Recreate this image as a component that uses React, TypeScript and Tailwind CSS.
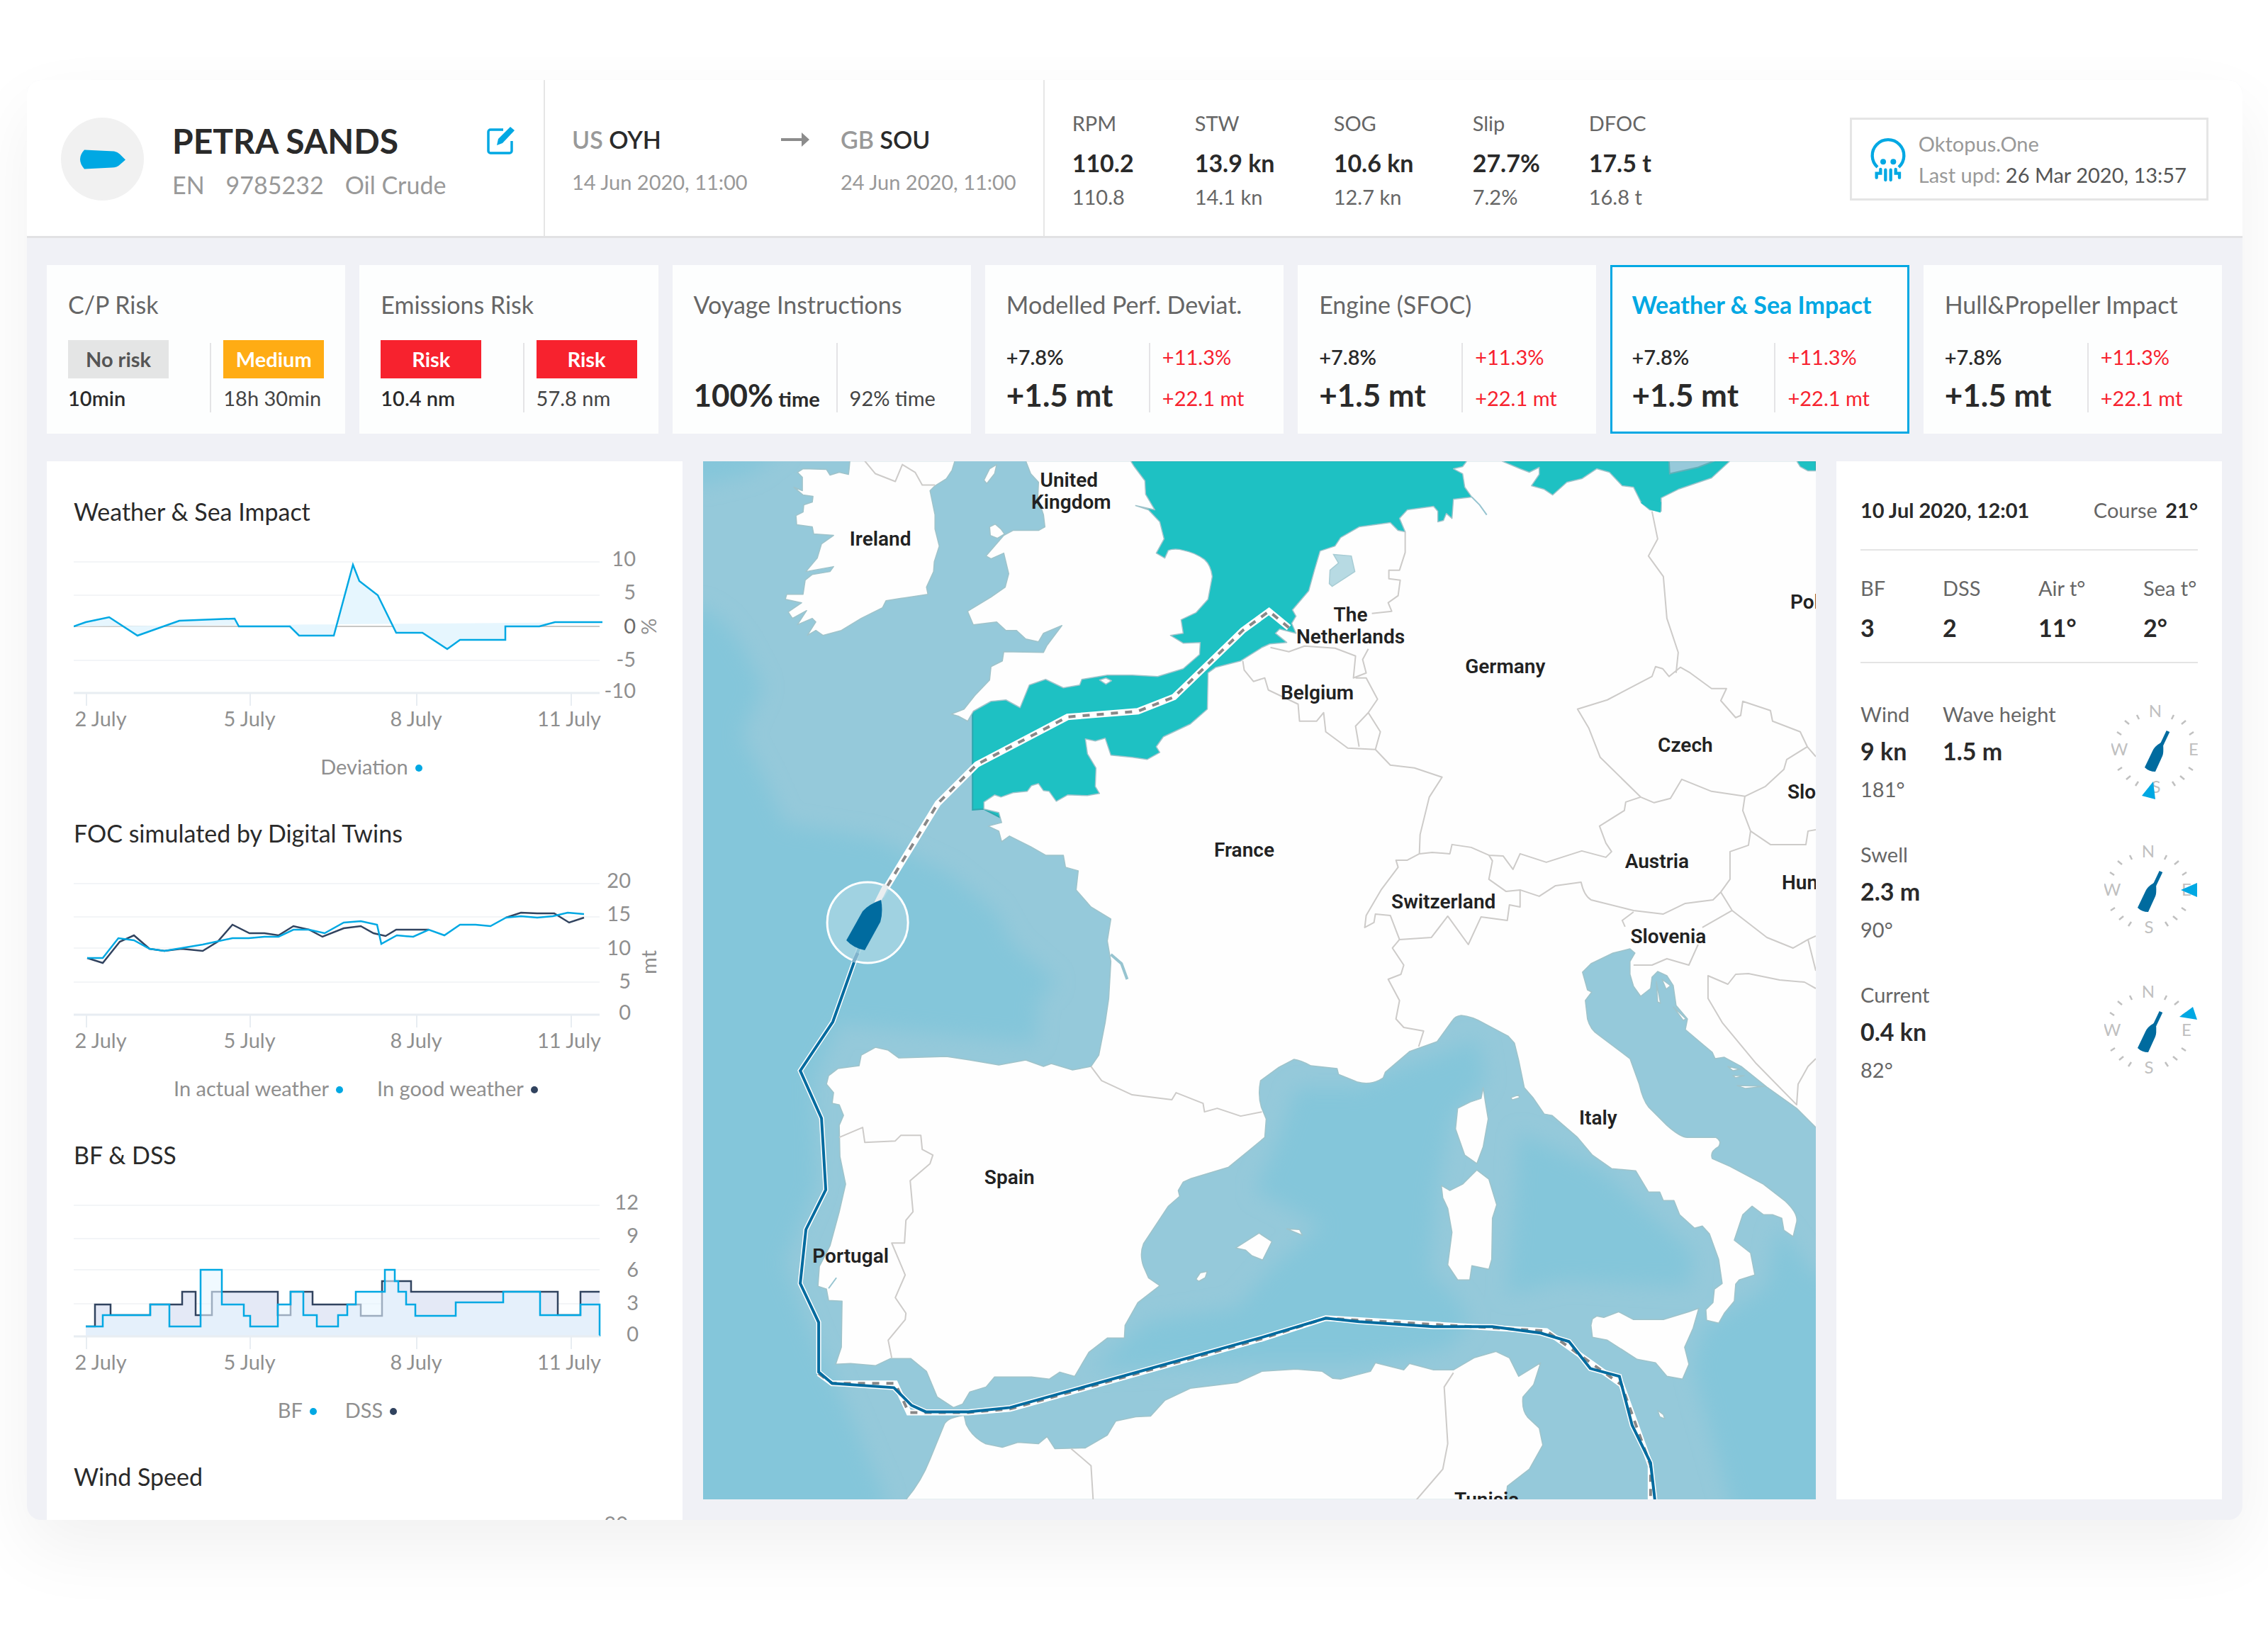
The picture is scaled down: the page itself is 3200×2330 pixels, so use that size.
import { clsx } from "clsx";

type Series = { d: string; color: string; fill?: string; fillD?: string; fillOpacity?: number };

type ChartProps = {
  title: string;
  labels: string[];
  labelX: number;
  unit?: string;
  unitY?: number;
  zeroLine?: boolean;
  series: Series[];
  legend: { name: string; dot: string }[];
  legendClass?: string;
};

const metrics = [
  { label: "RPM", value: "110.2", sub: "110.8" },
  { label: "STW", value: "13.9 kn", sub: "14.1 kn" },
  { label: "SOG", value: "10.6 kn", sub: "12.7 kn" },
  { label: "Slip", value: "27.7%", sub: "7.2%" },
  { label: "DFOC", value: "17.5 t", sub: "16.8 t" },
];

const impactTiles = [
  { title: "Modelled Perf. Deviat.", active: false },
  { title: "Engine (SFOC)", active: false },
  { title: "Weather & Sea Impact", active: true },
  { title: "Hull&Propeller Impact", active: false },
];

const deviationLine =
  "M0 138L17 132L50 125L90 151L149 130L227 127L233 138H305L318 151H367L394 51L403 74L429 94L455 147H492L527 170L545 157H609V138H657L679 132H746";

const bfLine =
  "M17 218H41V202H108V187H135V218H179V138H209V187H240V203H249V218H288V187H306V169H324V202H343V218H373V202H386V187H398V169H439V138H453V154H458V169H469V187H482V203H539V184H606V169H658V202H715V187H742V232";

const dssLine =
  "M17 218H30V187H52V202H108V187H153V169H172V202H195V169H288V202H306V169H337V187H405V203H435V154H476V169H683V202H715V169H742";

const charts: ChartProps[] = [
  {
    title: "Weather & Sea Impact",
    labels: ["10", "5", "0", "-5", "-10"],
    labelX: 793,
    unit: "%",
    unitY: 138,
    zeroLine: true,
    series: [{ d: deviationLine, color: "#00a8e3", fill: "#e6f6fe", fillD: deviationLine + "Z" }],
    legend: [{ name: "Deviation", dot: "bg-[#00a8e3]" }],
  },
  {
    title: "FOC simulated by Digital Twins",
    labels: ["20", "15", "10", "5", "0"],
    labelX: 786,
    unit: "mt",
    unitY: 158,
    series: [
      {
        d: "M19 152L41 159L65 129L85 120L107 139L128 142L152 139L182 142L203 129L224 105L248 117H269L289 120L310 107L332 112L351 122L381 110L405 107L423 117L440 121L455 112H501M610 95L631 88L654 89H678L699 102L720 95",
        color: "#31435f",
      },
      {
        d: "M19 152H41L63 124L85 127L107 139L128 142L182 133L224 124H247L269 122H289L310 112H332L354 117L381 102L405 100L428 105L434 132L456 120L479 122L501 112L523 120L545 105H567L588 107L610 95L631 93L654 95L676 93L697 88L720 90",
        color: "#00a8e3",
      },
    ],
    legend: [
      { name: "In actual weather", dot: "bg-[#00a8e3]" },
      { name: "In good weather", dot: "bg-[#31435f]" },
    ],
    legendClass: "gap-12 pr-11",
  },
  {
    title: "BF & DSS",
    labels: ["12", "9", "6", "3", "0"],
    labelX: 797,
    series: [
      { d: dssLine, color: "#31435f", fill: "#e4e9f6", fillD: dssLine + "V232H17Z" },
      { d: bfLine, color: "#00a8e3", fill: "#e6f5ff", fillD: bfLine + "H17Z", fillOpacity: 0.6 },
    ],
    legend: [
      { name: "BF", dot: "bg-[#00a8e3]" },
      { name: "DSS", dot: "bg-[#31435f]" },
    ],
    legendClass: "gap-10 pr-24",
  },
  {
    title: "Wind Speed",
    labels: ["30"],
    labelX: 782,
    series: [],
    legend: [],
  },
];

const seaDeep = [
  "M992 858L1021 878L1046 911L1077 970L1046 1037L1077 1096L1107 1163L1235 1183L1337 1231L1403 1285L1429 1333L1490 1386L1465 1409L1460 1472L1337 1460L1184 1445L1148 1525L1153 1671L1107 1782L1148 1889L1199 1996L1225 2059L1250 2116L1240 2140H960V858Z",
  "M960 630H1110L1060 668L992 684H960Z",
  "M1969 1511L2084 1467L2095 1525L2048 1574L2027 1671L2016 1797L2053 1831L2074 1865L2042 1903L1917 1923H1760L1541 1933L1618 1865L1745 1845L1791 1792L1865 1729L1770 1680L1802 1613L1828 1535L1917 1535Z",
  "M2142 1598L2257 1651L2388 1768L2382 1816L2205 1807L2126 1827L2137 1695Z",
  "M2508 1729L2561 1802H2590V2150H2450L2403 1986L2388 1928L2403 1874L2492 1816Z",
];

const restrictedZone =
  "M1590 651H2561V740L2200 800L1900 1040L1760 1100L1500 1200L1388 1142L1372 1143V1004L1400 988L1450 950L1520 930L1550 800Z";

const land = [
  // Ireland
  "M1199 651L1198 662L1197 670L1184 667L1171 671L1166 663L1133 662L1125 667L1132 674V693L1120 688L1133 699L1147 701L1146 709L1134 713L1133 723L1123 728L1124 741L1146 744L1148 754L1176 756L1159 768L1153 788L1137 807L1176 800L1171 807L1146 811L1136 819L1133 839H1110L1108 846L1131 851L1112 864L1118 873L1138 862L1125 882L1146 873L1151 878L1139 897L1151 890L1161 897L1187 890L1215 873L1245 858L1250 848L1276 844L1309 839L1307 829L1317 807L1318 793L1325 771L1319 747V727L1312 693L1319 686L1335 676L1343 664L1347 651Z",
  // Great Britain
  "M1447 651L1454 669L1465 681L1464 703L1472 727L1474 744L1465 749H1429L1416 756L1391 785L1398 789L1416 781L1423 810L1418 829L1398 843L1365 863L1373 882L1406 878L1419 890H1434L1447 902L1465 906L1472 894L1498 883L1477 911L1472 921L1416 920L1414 933L1398 941L1396 960L1375 982L1360 1001L1342 1008L1352 1011L1365 1018L1373 1004L1398 990L1419 988L1439 999L1452 967L1475 959L1500 971L1523 967L1526 959L1562 953H1597L1633 955L1669 944L1692 924L1693 907L1669 908L1651 897L1669 894L1666 875L1687 865L1704 846L1710 814Q1708 798 1699 790Q1685 780 1669 777Q1658 774 1648 777L1643 788L1631 781L1642 761L1636 737L1620 720L1602 714L1629 720L1616 698L1615 679L1600 659L1595 651Z",
  // Man, Anglesey, Wight
  "M1406 656L1403 669L1392 683L1388 678L1396 662Z",
  "M1396 744L1404 740L1412 747L1417 754L1407 760L1397 756Z",
  "M1551 960L1560 957L1568 961L1560 966Z",
  // Mainland
  "M1388 1142V1132L1403 1122L1412 1125L1429 1119L1449 1117L1455 1109L1465 1106L1472 1116L1480 1117L1490 1131L1506 1122L1534 1123L1551 1120L1545 1110L1546 1084L1534 1064L1531 1043L1545 1046L1559 1042L1567 1066L1597 1069L1618 1072L1636 1062L1631 1054L1641 1040L1679 1022L1703 1001L1704 950L1715 942L1750 933L1780 914L1791 909L1815 907L1799 894L1805 888L1828 894L1822 880L1828 870L1823 861L1846 834L1854 805L1862 778L1883 771L1891 759L1917 744L1961 738L1972 749L1982 751L1974 732L1985 720L2022 715L2028 722V737L2036 735L2040 725L2048 732L2050 705L2076 702L2066 688L2063 669L2050 662L2063 659L2069 651H2118L2144 662L2157 667L2171 660V670L2160 686L2178 691L2190 699L2210 681L2231 676L2252 662L2270 667L2288 686L2304 688L2315 710L2327 720L2343 722V703L2367 691L2414 675L2440 651H2534L2539 659L2550 665L2570 665V1600L2561 1591L2534 1564L2492 1534L2456 1505L2432 1492L2419 1494L2415 1485L2403 1475L2377 1453L2380 1438L2364 1419L2360 1391L2351 1377L2338 1371L2330 1379L2328 1395L2314 1406L2304 1392L2299 1375V1357L2306 1345L2299 1339L2275 1345L2244 1360L2232 1372L2239 1397L2245 1400L2236 1412L2239 1438Q2243 1453 2254 1460L2299 1494L2312 1530Q2317 1552 2325 1562L2351 1588Q2370 1605 2380 1605H2420Q2429 1610 2424 1618Q2411 1625 2415 1635L2440 1646L2487 1671L2518 1695Q2536 1712 2534 1724L2529 1745L2516 1736L2513 1719L2500 1714H2487L2471 1702L2458 1714L2446 1750L2469 1768L2475 1799L2453 1806L2448 1812L2446 1836L2432 1853L2424 1867L2407 1863L2406 1848L2416 1838L2418 1819L2429 1811L2424 1777L2411 1741L2401 1730L2390 1733L2369 1714L2361 1694L2346 1694L2341 1682H2325L2307 1652L2273 1649L2246 1630L2225 1605L2189 1574L2178 1572L2163 1550L2150 1535L2142 1496L2136 1472L2127 1462L2095 1445Q2076 1434 2061 1433Q2052 1434 2048 1441L2027 1470L1988 1484L1954 1513L1951 1521Q1935 1532 1915 1527L1888 1516L1886 1508L1849 1504Q1834 1496 1825 1495L1804 1506L1778 1525Q1774 1545 1779 1562L1786 1579L1784 1605L1760 1625L1733 1647L1680 1663L1669 1668L1662 1680L1664 1688L1648 1702L1613 1755Q1607 1770 1613 1787L1620 1803L1636 1814L1605 1838L1587 1870L1586 1888H1562L1536 1908L1516 1942L1495 1936L1480 1946L1455 1943H1403L1391 1957L1368 1964L1358 1981L1345 1986L1322 1971L1307 1935L1285 1917H1256L1235 1927L1200 1924L1179 1925L1187 1901L1188 1836L1169 1835L1166 1819L1154 1815L1156 1787L1171 1758L1184 1710L1193 1671L1185 1632L1184 1588L1190 1574L1184 1559L1174 1557L1176 1542L1166 1530L1169 1518L1182 1508L1212 1504L1215 1489L1235 1478L1253 1482L1268 1493L1335 1491L1368 1496L1409 1503L1447 1496L1472 1505L1483 1501L1513 1510L1539 1505L1550 1489L1559 1443L1564 1409L1567 1357L1562 1328L1567 1297L1539 1280L1518 1256L1521 1229L1503 1224L1500 1207L1475 1207L1454 1195L1424 1180L1413 1188L1409 1173L1394 1166L1413 1161L1409 1147Z",
  // Sicily, Sardinia, Corsica
  "M2244 1870L2246 1861L2252 1857L2262 1859L2283 1851L2304 1862L2346 1862L2382 1851L2396 1846L2388 1874L2376 1901L2382 1925L2373 1946L2351 1942L2335 1923L2309 1918L2267 1891L2246 1887Z",
  "M2033 1673L2045 1680L2063 1671L2083 1651L2100 1664L2111 1700L2105 1719L2104 1777L2100 1791L2076 1786L2073 1806H2056L2042 1785L2048 1739L2042 1705L2035 1690Z",
  "M2092 1535L2095 1555L2099 1579L2092 1618L2083 1642L2066 1630L2053 1593L2056 1564L2074 1555L2089 1550Z",
  // Balearics, Elba, Malta
  "M1743 1761L1776 1740L1794 1752L1781 1778L1766 1772L1757 1764Z",
  "M1815 1734L1833 1735L1837 1743Z",
  "M1687 1805L1693 1796L1703 1794L1700 1803L1691 1808Z",
  "M2131 1549L2142 1545L2143 1549L2133 1552Z",
  "M2338 1990L2346 1996L2348 2002L2341 1999Z",
  // Croatian islands
  "M2336 1385L2342 1416L2338 1414Z",
  "M2344 1382L2356 1391L2350 1396Z",
  "M2360 1421L2378 1438L2374 1440Z",
  "M2437 1505L2454 1509L2444 1511Z",
  "M2444 1518L2460 1518L2448 1521Z",
  "M2450 1532L2490 1533L2462 1536Z",
  // North Africa
  "M1278 2116Q1300 2090 1312 2059L1332 2010Q1336 2000 1360 1997L1363 2010Q1372 2028 1390 2037L1414 2042L1436 2035L1465 2037L1477 2027L1488 2044L1531 2043L1562 2025L1574 2005L1602 1999L1623 1998L1643 1976L1679 1959L1745 1951L1780 1935L1828 1932L1865 1935L1880 1945L1891 1946L1933 1935L1940 1923L1980 1933L1988 1924L2022 1933H2050L2079 1916L2110 1907L2129 1916L2142 1942L2173 1923L2163 1954L2148 1971Q2146 1990 2155 2000L2171 2015L2176 2039L2157 2073L2126 2097L2124 2116Z",
];

const borders = [
  "M1220 651L1235 669L1263 680L1273 656L1291 667L1301 685L1319 685",
  "M1982 751V780L1974 805H1959V817L1975 819L1972 841L1958 851L1963 863L1935 866",
  "M1792 914L1818 920L1840 912L1883 915L1912 926L1909 957L1927 950L1922 931L1930 916",
  "M1912 957H1927L1943 987L1930 1006L1912 1025L1917 1054M1930 1006L1947 1033L1940 1058",
  "M1753 933L1755 946L1768 962L1784 957L1789 974L1831 994L1833 1018H1857L1867 1006L1870 1033L1901 1056L1940 1058L1961 1080L1995 1084L2034 1097L2016 1125L2003 1178L2002 1205",
  "M2002 1205L2020 1203L2045 1205L2048 1192L2075 1196L2100 1207L2120 1208L2134 1227L2144 1205L2181 1217L2231 1201L2265 1210L2273 1202L2265 1190L2256 1166L2291 1144L2293 1132L2314 1125",
  "M2002 1205L1985 1214L1969 1214L1972 1224L1948 1256L1927 1292L1925 1309L1938 1302L1940 1290L1961 1292L1974 1326L2019 1323L2042 1293L2071 1333L2089 1294L2126 1299L2129 1277L2144 1280V1256L2124 1258L2100 1241L2105 1215L2100 1207",
  "M2144 1256L2171 1265L2194 1250L2230 1245Q2234 1264 2244 1270L2304 1285L2346 1290L2377 1275L2416 1270L2427 1259L2440 1241V1202L2466 1193L2469 1173L2458 1144L2461 1124",
  "M2314 1125L2257 1069L2241 1028L2225 1001L2267 988L2330 955L2335 941L2345 944L2354 955L2370 942L2384 950L2414 972H2435L2427 989L2448 1013L2455 1010L2458 990L2497 1003L2500 1018L2539 1033L2549 1054L2520 1072L2516 1086L2490 1110L2461 1124L2414 1117L2372 1100L2356 1127L2333 1133L2314 1125",
  "M2330 722L2338 761L2325 785L2346 814L2351 873L2367 921L2364 950",
  "M2549 1054L2561 1068M2469 1173L2497 1192H2547L2550 1173L2561 1171",
  "M2427 1259L2443 1285L2492 1323L2529 1338L2550 1326L2561 1321M2443 1285L2401 1309M2395 1333L2382 1362L2351 1353L2330 1362H2304M2304 1287L2288 1299L2292 1308",
  "M2561 1494L2550 1505L2536 1530L2534 1559L2477 1501L2429 1443L2409 1409V1377L2437 1389L2448 1375L2466 1374L2510 1383L2545 1386L2561 1395M2550 1326L2561 1370",
  "M1974 1326L1964 1338L1980 1362L1976 1375L1958 1382L1974 1412L1969 1438L1980 1450L2008 1455L2001 1477",
  "M1539 1505L1554 1525L1597 1545L1653 1552L1659 1542L1697 1557L1699 1569L1717 1564L1750 1575L1780 1569",
  "M1184 1605L1217 1591L1220 1612L1263 1610L1271 1602H1299L1301 1622L1316 1630L1312 1642L1284 1666L1288 1710L1278 1722L1276 1754H1258L1277 1799L1263 1831L1278 1853L1277 1862L1253 1891L1258 1916",
  "M1511 2044L1539 2068L1542 2116",
  "M2050 1937L2037 1957L2042 2037L2035 2073L1998 2116",
];

const plannedRoute =
  "M1818 886L1790 863L1753 890L1656 984L1605 1004L1506 1012L1378 1079L1323 1134L1243 1265";
const plannedSouth =
  "M1155 1938L1174 1952H1263L1282 1993H1366L1425 1988L1780 1889L1870 1860L2181 1878L2287 1954L2328 2068V2116";
const actualRoute =
  "M1212 1338L1175 1442L1129 1511L1159 1578L1165 1679L1137 1735L1129 1811L1155 1866V1936L1174 1952L1261 1958L1286 1983L1306 1992H1366L1425 1986L1780 1887L1870 1860L1917 1865L2022 1872H2105L2173 1881L2213 1893L2243 1931L2284 1942L2302 2011L2328 2064L2334 2116";

const places = [
  { name: "United", x: 1508, y: 687 },
  { name: "Kingdom", x: 1511, y: 718 },
  { name: "Ireland", x: 1242, y: 770 },
  { name: "The", x: 1905, y: 877 },
  { name: "Netherlands", x: 1905, y: 908 },
  { name: "Germany", x: 2123, y: 950 },
  { name: "Belgium", x: 1858, y: 987 },
  { name: "Czech", x: 2377, y: 1061 },
  { name: "France", x: 1755, y: 1209 },
  { name: "Austria", x: 2337, y: 1225 },
  { name: "Switzerland", x: 2036, y: 1282 },
  { name: "Slovenia", x: 2353, y: 1331 },
  { name: "Italy", x: 2254, y: 1587 },
  { name: "Spain", x: 1424, y: 1671 },
  { name: "Portugal", x: 1200, y: 1782 },
  { name: "Tunisia", x: 2097, y: 2126 },
];

// Names that run past the right edge of the map
const edgePlaces = [
  { name: "Poland", x: 2525, y: 859 },
  { name: "Slovakia", x: 2521, y: 1127 },
  { name: "Hungary", x: 2513, y: 1255 },
];

const conditions = [
  {
    rows: [
      { label: "Wind", value: "9 kn", sub: "181°" },
      { label: "Wave height", value: "1.5 m", sub: "" },
    ],
    arrow: "-3,45 -19,65 0,70",
    overflow: false,
  },
  { rows: [{ label: "Swell", value: "2.3 m", sub: "90°" }], arrow: "46,0 69,-10 69,10", overflow: true },
  { rows: [{ label: "Current", value: "0.4 kn", sub: "82°" }], arrow: "44,-19 63,-33 69,-15", overflow: true },
];

const Header = () => (
  <header className="flex h-[223px] shrink-0 border-b-[3px] border-[#e2e2e4] bg-white">
    <div className="flex w-[731px] shrink-0 items-start border-r-2 border-[#e6e6e6] pr-10 pl-12">
      <div className="mt-[53px] flex h-[117px] w-[117px] items-center justify-center rounded-full bg-[#f1f1f1]">
        <svg className="h-7 w-16" viewBox="0 0 64 27" fill="#00a8e3">
          <path d="M6 0Q-6 13 6 27L45 25Q52 25 56 21L64 14L56 6Q53 3 48 2Z" />
        </svg>
      </div>
      <div className="mt-14 ml-10 flex-1">
        <h1 className="text-[48px] leading-[60px] font-bold text-[#2a2a2a]">PETRA SANDS</h1>
        <p className="flex gap-[30px] text-[34px] leading-[64px] text-[#999]">
          <span>EN</span>
          <span>9785232</span>
          <span>Oil Crude</span>
        </p>
      </div>
      <button type="button" aria-label="Edit vessel" className="mt-[66px]">
        <svg className="h-10 w-10" viewBox="0 0 40 40" fill="none" stroke="#00a8e3" strokeWidth="3.5">
          <path d="M23 4H5a3 3 0 0 0-3 3v27a3 3 0 0 0 3 3h27a3 3 0 0 0 3-3V20" />
          <path d="M14 26l2-9L33 0l6 5L22 23z" fill="#00a8e3" stroke="none" />
        </svg>
      </button>
    </div>

    <div className="flex shrink-0 items-start border-r-2 border-[#e6e6e6] px-[38px] pt-[60px]">
      <div className="w-[295px]">
        <div className="text-[34px] leading-[48px] font-semibold text-[#2a2a2a]">
          <span className="text-[#999]">US</span> OYH
        </div>
        <div className="mt-2 text-[29px] leading-[56px] text-[#999]">14 Jun 2020, 11:00</div>
      </div>
      <svg className="mt-3 mr-11 h-6 w-10" viewBox="0 0 40 24" fill="#8c8c8c">
        <path d="M0 10h29V2l11 10-11 10v-8H0z" />
      </svg>
      <div>
        <div className="text-[34px] leading-[48px] font-semibold text-[#2a2a2a]">
          <span className="text-[#999]">GB</span> SOU
        </div>
        <div className="mt-2 text-[29px] leading-[56px] text-[#999]">24 Jun 2020, 11:00</div>
      </div>
    </div>

    <dl className="grid grid-cols-[173px_196px_196px_164px_auto] content-start pt-[37px] pl-[39px]">
      {metrics.map((metric) => (
        <div key={metric.label}>
          <dt className="text-[29px] leading-[48px] text-[#666]">{metric.label}</dt>
          <dd className="text-[34px] leading-[64px] font-bold text-[#2a2a2a]">{metric.value}</dd>
          <dd className="text-[29px] leading-8 text-[#666]">{metric.sub}</dd>
        </div>
      ))}
    </dl>

    <div className="mt-[53px] mr-12 ml-auto flex h-[117px] items-center border-[3px] border-[#e5e5e5] pr-7 pl-[26px]">
      <svg className="h-16 w-[50px]" viewBox="72 66 150 192" fill="none" stroke="#00a8e3" strokeWidth="13">
        <path d="M102 195A67 67 0 1 1 192 195" />
        <path d="M136 206V249M158 206V249M115 204V221H98V239M179 204V221H195V239" strokeLinecap="round" />
        <circle cx="126" cy="172" r="12" fill="#00a8e3" stroke="none" />
        <circle cx="169" cy="172" r="12" fill="#00a8e3" stroke="none" />
      </svg>
      <div className="ml-[18px] text-[29px] leading-[44px] text-[#999]">
        <div>Oktopus.One</div>
        <div>
          Last upd: <span className="text-[#555]">26 Mar 2020, 13:57</span>
        </div>
      </div>
    </div>
  </header>
);

const tileClass = "flex flex-col bg-[#fdfefe] px-[30px] pt-8 pb-4 text-left text-[29px]";

const Divider = () => <span className="mt-1 h-[98px] w-0.5 shrink-0 bg-[#e4e4e6]" />;

const RiskTile = ({ title, cells }: { title: string; cells: { badge: string; color: string; value: string }[] }) => (
  <button type="button" className={tileClass}>
    <span className="text-[34px] leading-[48px] text-[#666]">{title}</span>
    <span className="mt-[26px] flex">
      {cells.map((cell, index) => (
        <span key={index} className={clsx("flex", index === 0 && "w-[203px] justify-between")}>
          <span className={clsx("flex flex-col", index === 1 && "pl-[17px]")}>
            <span className={clsx("flex h-[54px] w-[142px] items-center justify-center font-bold", cell.color)}>
              {cell.badge}
            </span>
            <span
              className={clsx(
                "mt-1 leading-[48px] whitespace-nowrap",
                index === 0 ? "font-semibold text-[#2a2a2a]" : "text-[#444]",
              )}
            >
              {cell.value}
            </span>
          </span>
          {index === 0 && <Divider />}
        </span>
      ))}
    </span>
  </button>
);

const ImpactTile = ({ title, active }: { title: string; active: boolean }) => (
  <button type="button" aria-pressed={active} className={clsx(tileClass, active && "ring-[3px] ring-[#00a8e3] ring-inset")}>
    <span
      className={clsx(
        "text-[34px] leading-[48px] whitespace-nowrap",
        active ? "font-bold text-[#00a8e3]" : "text-[#666]",
      )}
    >
      {title}
    </span>
    <span className="mt-[26px] flex">
      <span className="flex w-[201px] flex-col text-[#2a2a2a]">
        <span className="leading-[48px] font-semibold">+7.8%</span>
        <span className="text-[44px] leading-[58px] font-bold">+1.5 mt</span>
      </span>
      <Divider />
      <span className="flex flex-col pl-[17px] whitespace-nowrap text-[#f7222e]">
        <span className="leading-[48px]">+11.3%</span>
        <span className="leading-[68px]">+22.1 mt</span>
      </span>
    </span>
  </button>
);

const Tiles = () => (
  <section className="grid grid-cols-7 gap-5">
    <RiskTile
      title="C/P Risk"
      cells={[
        { badge: "No risk", color: "bg-[#e4e5e5] text-[#555]", value: "10min" },
        { badge: "Medium", color: "bg-[#ffac14] text-white", value: "18h 30min" },
      ]}
    />
    <RiskTile
      title="Emissions Risk"
      cells={[
        { badge: "Risk", color: "bg-[#f7222e] text-white", value: "10.4 nm" },
        { badge: "Risk", color: "bg-[#f7222e] text-white", value: "57.8 nm" },
      ]}
    />
    <button type="button" className={tileClass}>
      <span className="text-[34px] leading-[48px] text-[#666]">Voyage Instructions</span>
      <span className="mt-[26px] flex">
        <span className="w-[201px] pt-12 leading-[58px] font-bold whitespace-nowrap text-[#2a2a2a]">
          <span className="text-[44px]">100%</span> time
        </span>
        <Divider />
        <span className="pt-12 pl-[17px] leading-[68px] whitespace-nowrap text-[#444]">92% time</span>
      </span>
    </button>
    {impactTiles.map((tile) => (
      <ImpactTile key={tile.title} title={tile.title} active={tile.active} />
    ))}
  </section>
);

const gridRows = [47, 94, 138, 186];
const labelRows = [53, 100, 148, 195, 239];
const days = [
  { name: "2 July", x: 38, tick: 18 },
  { name: "5 July", x: 248, tick: 249 },
  { name: "8 July", x: 483, tick: 484 },
  { name: "11 July", x: 699, tick: 702 },
];

const Chart = ({ title, labels, labelX, unit, unitY, zeroLine, series, legend, legendClass }: ChartProps) => (
  <figure className="h-[454px] shrink-0">
    <figcaption className="text-[34px] leading-[48px] text-[#2a2a2a]">{title}</figcaption>
    <svg className="w-full text-[29px]" viewBox="0 0 840 300" fill="none">
      {gridRows.map((y) => (
        <path key={y} d={`M0 ${y}H742`} stroke={zeroLine && y === 138 ? "#c8c8c6" : "#f3f5f7"} strokeWidth="2" />
      ))}
      {series.map((item) => (
        <g key={item.d}>
          {item.fill && <path d={item.fillD} fill={item.fill} fillOpacity={item.fillOpacity} />}
          <path d={item.d} stroke={item.color} strokeWidth="2.5" />
        </g>
      ))}
      <path d="M0 232H742" stroke="#e8edf2" strokeWidth="3" />
      {series.length > 0 &&
        days.map((day) => (
          <g key={day.name}>
            <path d={`M${day.tick} 232V250`} stroke="#e8edf2" strokeWidth="2" />
            <text x={day.x} y="279" textAnchor="middle" fill="#8f8f8f">
              {day.name}
            </text>
          </g>
        ))}
      {labels.map((label, index) => (
        <text
          key={label}
          x={labelX}
          y={labelRows[index]}
          textAnchor="end"
          fill={zeroLine && label === "0" ? "#6b6b6b" : "#8f8f8f"}
        >
          {label}
        </text>
      ))}
      {unit && (
        <text transform={`translate(822 ${unitY}) rotate(-90)`} textAnchor="middle" fill="#8f8f8f">
          {unit}
        </text>
      )}
    </svg>
    <div className={clsx("mt-3 flex justify-center text-[29px] leading-[48px] text-[#8f8f8f]", legendClass)}>
      {legend.map((item) => (
        <span key={item.name} className="flex items-center gap-2.5">
          {item.name}
          <i className={clsx("mt-1 h-2.5 w-2.5 rounded-full", item.dot)} />
        </span>
      ))}
    </div>
  </figure>
);

const RouteMap = () => (
  <svg
    className="h-full w-full"
    viewBox="992 651 1569 1465"
    preserveAspectRatio="xMidYMid slice"
    role="img"
    aria-label="Voyage route"
  >
    <defs>
      <filter id="depth" x="-5%" y="-5%" width="110%" height="110%">
        <feGaussianBlur stdDeviation="14" />
      </filter>
    </defs>
    <path d="M980 640H2580V2130H980Z" fill="#95c9da" />
    <g fill="#84c6da" filter="url(#depth)">
      {seaDeep.map((d) => (
        <path key={d} d={d} />
      ))}
    </g>
    <path d={restrictedZone} fill="#1ec1c3" stroke="#2ba7ae" strokeWidth="2" />
    <path d="M2354 651H2418L2395 660L2355 669Z" fill="#97c9da" stroke="#5fb0b8" strokeWidth="2" />
    <g fill="#fefefe" stroke="#9fc3ca" strokeWidth="1.5" strokeLinejoin="round">
      {land.map((d) => (
        <path key={d} d={d} />
      ))}
    </g>
    <path d="M2314 710L2325 706L2343 709L2342 724L2328 720Z" fill="#1ec1c3" />
    <path
      d="M1881 783L1906 785L1911 807L1879 828L1875 824L1876 805L1888 795Z"
      fill="#b7dae3"
      stroke="#a7ccd4"
      strokeWidth="1.5"
    />
    <g fill="none" stroke="#97c4d0" strokeWidth="2">
      <path d="M2076 702L2087 713L2097 727" />
      <path d="M1567 1347L1582 1360L1590 1382" strokeWidth="4" />
      <path d="M1169 1818L1180 1803" />
    </g>
    <g fill="none" stroke="#cdcbc9" strokeWidth="2" strokeLinejoin="round">
      {borders.map((d) => (
        <path key={d} d={d} />
      ))}
    </g>
    <g fill="#222" textAnchor="middle" fontSize="28" fontWeight="600" fontFamily="Roboto, 'Liberation Sans', sans-serif">
      {places.map((place) => (
        <text key={place.name} x={place.x} y={place.y}>
          {place.name}
        </text>
      ))}
      {edgePlaces.map((place) => (
        <text key={place.name} x={place.x} y={place.y} textAnchor="start">
          {place.name}
        </text>
      ))}
    </g>
    <g fill="none" strokeLinejoin="miter">
      <path d={plannedRoute} stroke="#fff" strokeWidth="9" />
      <path d={plannedRoute} stroke="#888" strokeWidth="4" strokeDasharray="10 10" />
      <path d={plannedSouth} stroke="#fff" strokeWidth="8" />
      <path d={actualRoute} stroke="#fff" strokeWidth="7" />
      <path d={plannedSouth} stroke="#888" strokeWidth="4" strokeDasharray="10 10" />
      <path d={actualRoute} stroke="#006b9f" strokeWidth="4" />
    </g>
    <circle cx="1224" cy="1302" r="57" fill="#a5d3e2" fillOpacity="0.85" stroke="#fff" strokeWidth="3" />
    <path d="M1237 1275L1250 1249" stroke="#e9eef0" strokeWidth="8" />
    <path d="M1210 1345L1204 1358" stroke="#7fb2cc" strokeWidth="5" />
    <path d="M1243 1270Q1246 1287 1242 1301L1220 1341Q1204 1338 1194 1327L1217 1286Q1226 1276 1243 1270Z" fill="#006b9f" />
  </svg>
);

const ticks = [
  [26, -49, 23, -43],
  [43, -41, 37, -36],
  [54, -25, 48, -21],
  [53, 29, 47, 25],
  [41, 42, 35, 37],
  [28, 51, 24, 45],
];

const Compass = ({ arrow, overflow }: { arrow: string; overflow: boolean }) => (
  <svg
    className={clsx("h-[148px] shrink-0", overflow ? "w-[132px]" : "w-[122px]")}
    viewBox={overflow ? "-62 -74 132 148" : "-62 -74 122 148"}
    fill="none"
  >
    <g stroke="#c0c0c0" strokeWidth="2.5">
      {ticks.map(([x1, y1, x2, y2]) => (
        <g key={`${x1} ${y1}`}>
          <path d={`M${x1} ${y1}L${x2} ${y2}`} />
          <path d={`M${-x1} ${y1}L${-x2} ${y2}`} />
        </g>
      ))}
    </g>
    <g fill="#c0c0c0" textAnchor="middle" fontSize="24">
      <text x="0" y="-46">N</text>
      <text x="-51" y="8">W</text>
      <text x="54" y="8">E</text>
      <text x="1" y="61">S</text>
    </g>
    <path d="M18 -26L9 -7" stroke="#006b9f" strokeWidth="5" />
    <path d="M8 -10Q-1 -5 -4 2L-15 25Q-9 31 0 31L10 9Q12 5 11 -9Z" fill="#006b9f" />
    <polygon points={arrow} fill="#00a8e3" />
  </svg>
);

const Reading = ({ label, value, sub }: { label: string; value: string; sub: string }) => (
  <div className="min-w-[86px]">
    <div className="text-[29px] leading-[48px] text-[#666]">{label}</div>
    <div className="text-[34px] leading-[56px] font-bold text-[#2a2a2a]">{value}</div>
    <div className="h-[52px] text-[29px] leading-[52px] text-[#666]">{sub}</div>
  </div>
);

const ConditionsPanel = () => (
  <aside className="mb-[29px] w-[544px] shrink-0 bg-white px-[34px] pt-[45px]">
    <div className="flex justify-between border-b-2 border-[#e4e4e4] pb-[31px] text-[29px] leading-[48px]">
      <time className="font-bold text-[#2a2a2a]">10 Jul 2020, 12:01</time>
      <span className="text-[#666]">
        Course <b className="ml-1 text-[#2a2a2a]">21°</b>
      </span>
    </div>
    <dl className="grid grid-cols-[116px_135px_148px_auto] border-b-2 border-[#e4e4e4] pt-[29px] pb-4">
      {[
        ["BF", "3"],
        ["DSS", "2"],
        ["Air t°", "11°"],
        ["Sea t°", "2°"],
      ].map(([label, value]) => (
        <div key={label}>
          <dt className="text-[29px] leading-[48px] whitespace-nowrap text-[#666]">{label}</dt>
          <dd className="text-[34px] leading-[64px] font-bold text-[#2a2a2a]">{value}</dd>
        </div>
      ))}
    </dl>
    <div className="flex flex-col gap-[42px] pt-12">
      {conditions.map((condition) => (
        <div key={condition.rows[0].label} className="flex items-start justify-between">
          <div className="grid grid-cols-[116px_auto]">
            {condition.rows.map((row) => (
              <Reading key={row.label} {...row} />
            ))}
          </div>
          <Compass arrow={condition.arrow} overflow={condition.overflow} />
        </div>
      ))}
    </div>
  </aside>
);

export default function App() {
  return (
    <div className="flex h-screen flex-col bg-white pt-[113px] pr-9 pb-[185px] pl-[38px] font-['Lato',sans-serif]">
      <div className="flex min-h-0 flex-1 flex-col overflow-hidden rounded-[20px] bg-[#f0f1f6] shadow-[0_40px_100px_rgba(0,0,0,0.06)]">
        <Header />
        <main className="flex min-h-0 flex-1 flex-col gap-[39px] pt-[38px] pr-[29px] pl-7">
          <Tiles />
          <div className="flex min-h-0 flex-1 gap-[29px]">
            <section className="flex w-[897px] shrink-0 flex-col overflow-y-auto bg-white pt-[47px] pr-[19px] pl-[38px] [scrollbar-width:none]">
              {charts.map((chart) => (
                <Chart key={chart.title} {...chart} />
              ))}
            </section>
            <section className="mb-[29px] min-w-0 flex-1 overflow-hidden">
              <RouteMap />
            </section>
            <ConditionsPanel />
          </div>
        </main>
      </div>
    </div>
  );
}
